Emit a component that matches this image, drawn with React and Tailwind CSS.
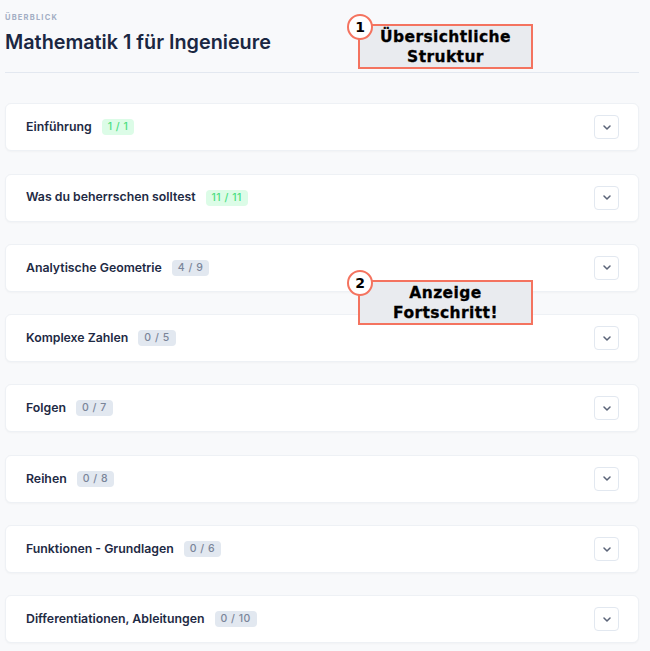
import React from "react";

const sections = [
  { title: "Einführung", done: 1, total: 1 },
  { title: "Was du beherrschen solltest", done: 11, total: 11 },
  { title: "Analytische Geometrie", done: 4, total: 9 },
  { title: "Komplexe Zahlen", done: 0, total: 5 },
  { title: "Folgen", done: 0, total: 7 },
  { title: "Reihen", done: 0, total: 8 },
  { title: "Funktionen - Grundlagen", done: 0, total: 6 },
  { title: "Differentiationen, Ableitungen", done: 0, total: 10 },
];

function Chevron() {
  return (
    <svg width="8" height="5" viewBox="0 0 8 5" fill="none">
      <path d="M1 1l3 3 3-3" stroke="#5b6478" strokeWidth="1.5" strokeLinecap="round" strokeLinejoin="round" />
    </svg>
  );
}

function Card({ title, done, total }) {
  const complete = done === total;
  return (
    <div className="flex h-[48px] items-center justify-between rounded-[6px] border border-[#eef1f5] bg-white pl-[20px] pr-[19px] shadow-[0_1px_2px_rgba(15,23,42,0.03)]">
      <div className="flex items-center gap-[10px]">
        <span className="text-[12.3px] font-semibold text-[#1e2a44]">{title}</span>
        <span
          className={
            complete
              ? "rounded-[4px] bg-[#dcfce7] px-[6px] py-[1px] text-[10.5px] font-medium leading-[14px] tracking-[0.5px] text-[#4ade80]"
              : "rounded-[4px] bg-[#e2e8f0] px-[6px] py-[1px] text-[10.5px] font-medium leading-[14px] tracking-[0.5px] text-[#7a8599]"
          }
        >
          {done} / {total}
        </span>
      </div>
      <div className="flex h-[24px] w-[25px] items-center justify-center rounded-[4px] border border-[#e2e8f0] bg-white">
        <Chevron />
      </div>
    </div>
  );
}

function Note({ n, lines, top }) {
  return (
    <div className="absolute left-[358px] w-[175px]" style={{ top }}>
      <div className="flex h-[45px] flex-col items-center justify-center border-2 border-[#f4735f] bg-[#e9ebef] text-center text-[15.5px] font-bold leading-[20px] tracking-[0.4px] text-black [-webkit-text-stroke:0.3px_black]" style={{ fontFamily: "'DejaVu Sans', sans-serif" }}>
        {lines.map((l) => (
          <span key={l}>{l}</span>
        ))}
      </div>
      <div className="absolute left-[-11px] top-[-10px] flex h-[26px] w-[26px] items-center justify-center rounded-full border-2 border-[#f4735f] bg-white text-[14px] font-bold text-black" style={{ fontFamily: "'DejaVu Sans', sans-serif" }}>
        {n}
      </div>
    </div>
  );
}

export default function App() {
  return (
    <div className="relative min-h-[651px] w-[650px] bg-[#f8f9fb] pl-[5px] pr-[11px]" style={{ fontFamily: "Inter, 'Noto Sans', sans-serif" }}>
      <div className="pt-[12px]">
        <div className="text-[7.5px] font-bold tracking-[1.2px] text-[#a3aec4]">ÜBERBLICK</div>
        <h1 className="mt-[6px] text-[19.8px] font-semibold leading-[26px] text-[#1a2742]">Mathematik 1 für Ingenieure</h1>
      </div>
      <div className="mt-[17px] h-px bg-[#e3e8f0]" />
      <div className="mt-[30px] flex flex-col gap-[22.3px]">
        {sections.map((s) => (
          <Card key={s.title} {...s} />
        ))}
      </div>
      <Note n="1" lines={["Übersichtliche", "Struktur"]} top={24} />
      <Note n="2" lines={["Anzeige", "Fortschritt!"]} top={280} />
    </div>
  );
}
